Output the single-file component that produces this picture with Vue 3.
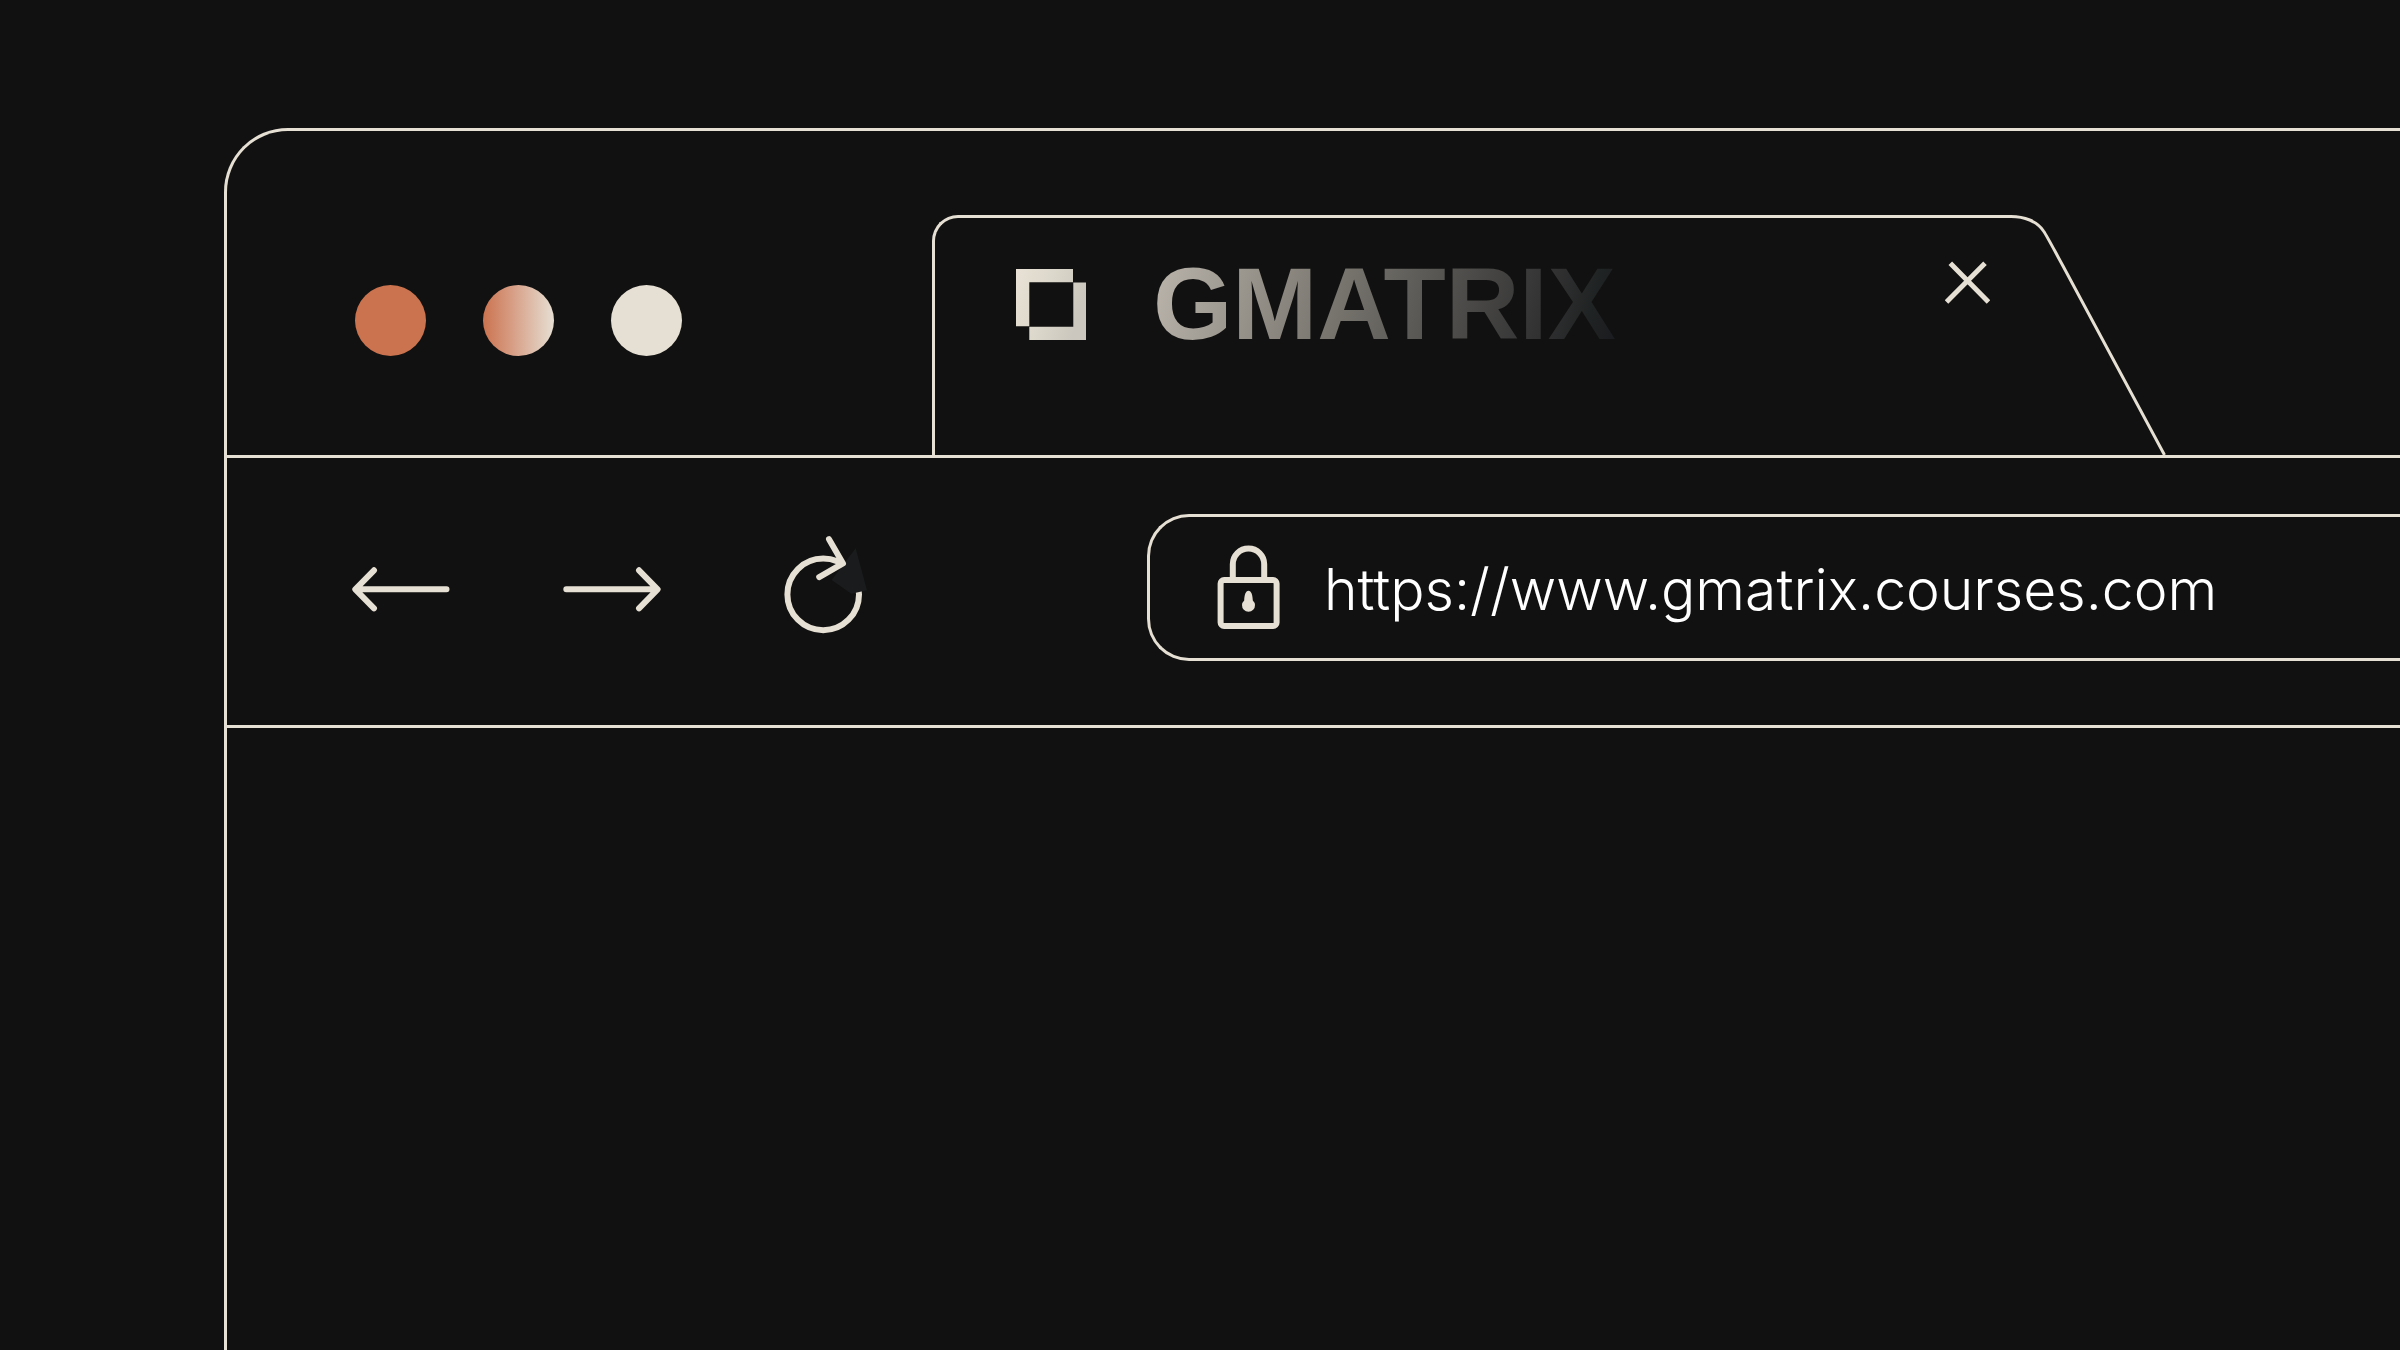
<template>
  <main class="window">
    <header class="tab-strip">
      <div class="window-controls">
        <button
          v-for="control in controls"
          :key="control.name"
          type="button"
          class="dot"
          :class="control.name"
          :aria-label="control.label"
        ></button>
      </div>

      <div v-if="isTabOpen" class="tab">
        <div class="tab-body">
          <div class="brand">
            <svg class="brand-logo" viewBox="0 0 70 71" aria-hidden="true">
              <defs>
                <linearGradient id="logo-fill" x1="0" y1="0" x2="1" y2="0.3">
                  <stop offset="0" stop-color="#e9e1d5" />
                  <stop offset="0.5" stop-color="#dcd8cb" />
                  <stop offset="1" stop-color="#cbc7be" />
                </linearGradient>
              </defs>
              <path
                fill="url(#logo-fill)"
                d="M0 0H57V13.3H13.3V57.3H0ZM57.3 13.5H70V71H13.3V57.7H57.3Z"
              />
            </svg>
            <span class="brand-name">GMATRIX</span>
          </div>
          <button type="button" class="icon-button" aria-label="Close tab" @click="isTabOpen = false">
            <svg class="close-icon" viewBox="0 0 45 45">
              <path d="M5.3 3.3L43.5 42M40 3.3L1.5 42" />
            </svg>
          </button>
        </div>
        <svg class="tab-edge" viewBox="0 0 155 240" aria-hidden="true">
          <path d="M0 1.5C13 1.5 26 6 32.5 16C36 21 44 36.5 52 51L153.5 240" />
        </svg>
      </div>
    </header>

    <nav class="toolbar">
      <div class="nav-buttons">
        <button type="button" class="icon-button" aria-label="Back">
          <svg class="nav-icon arrow" viewBox="0 0 98 117">
            <path d="M94.5 60.3H4M22 41.3L3.3 60.3L22 79.3" />
          </svg>
        </button>
        <button type="button" class="icon-button" aria-label="Forward">
          <svg class="nav-icon arrow" viewBox="0 0 98 117">
            <path d="M3.3 60.3H94M76 41.3L94.6 60.3L76 79.3" />
          </svg>
        </button>
        <button type="button" class="icon-button" aria-label="Reload">
          <svg class="nav-icon reload" viewBox="0 0 98 117">
            <circle cx="49.2" cy="65.4" r="35.8" />
            <polygon points="81.7,19.3 93,61.3 77.3,64.7 57.7,51" />
            <path d="M55 10.2L69 34.4L45.2 48.1" />
          </svg>
        </button>
      </div>

      <label class="address-bar">
        <svg class="lock-icon" viewBox="0 0 63 85" aria-hidden="true">
          <path d="M15.8 33V19.3A15.7 15.7 0 0 1 47.2 19.3V33" />
          <rect x="3.6" y="35" width="56" height="46" rx="3.5" />
          <path
            class="keyhole"
            d="M31.5 45.7C34.4 45.7 35.6 50 35.8 55.5A6.5 6.5 0 1 1 27.2 55.5C27.4 50 28.6 45.7 31.5 45.7Z"
          />
        </svg>
        <input v-model="url" type="text" class="address-input" aria-label="Address" spellcheck="false">
      </label>
    </nav>
  </main>
</template>

<script setup>
import { ref } from 'vue';

const url = ref('https://www.gmatrix.courses.com');
const isTabOpen = ref(true);

const controls = [
  { name: 'close', label: 'Close window' },
  { name: 'minimize', label: 'Minimize window' },
  { name: 'maximize', label: 'Maximize window' },
];
</script>

<style>
body {
  background-color: #111111;
}

#app {
  display: flex;
  min-height: 100vh;
  overflow-x: hidden;
}
</style>

<style scoped>
.window {
  flex: 1;
  min-width: 0;
  box-sizing: border-box;
  margin: 128px 0 0 224px;
  border-top: 3px solid #e6dfd3;
  border-left: 3px solid #e6dfd3;
  border-top-left-radius: 64px;
}

.tab-strip {
  display: flex;
  align-items: flex-start;
  gap: 250px;
  min-height: 324px;
  padding-left: 128px;
  border-bottom: 3px solid #e6dfd3;
}

.window-controls {
  display: flex;
  gap: 57px;
  padding-top: 154px;
}

.dot {
  width: 71px;
  height: 71px;
  padding: 0;
  border: none;
  border-radius: 50%;
}

.close {
  background: #cb734f;
}

.minimize {
  background: linear-gradient(90deg, #cb734f, #d8a28a 45%, #e6dfd3);
}

.maximize {
  background: #e6dfd3;
}

.tab {
  display: flex;
  flex: 0 1 1234px;
  padding-top: 84px;
}

.tab-body {
  display: flex;
  flex: 1;
  align-items: flex-start;
  justify-content: space-between;
  box-sizing: border-box;
  height: 240px;
  padding: 42px 21px 0 81px;
  border-top: 3px solid #e6dfd3;
  border-left: 3px solid #e6dfd3;
  border-top-left-radius: 26px;
}

.tab-edge {
  flex: none;
  width: 155px;
  height: 240px;
  fill: none;
  stroke: #e6dfd3;
  stroke-width: 3;
}

.brand {
  display: flex;
  align-items: center;
  gap: 67px;
  padding-top: 3px;
}

.brand-logo {
  width: 70px;
  height: 71px;
}

.brand-name {
  font-family: "Liberation Sans", Arial, sans-serif;
  font-size: 102px;
  font-weight: 700;
  line-height: 82px;
  color: transparent;
  background: linear-gradient(105deg, #bbb5ac, #7b7871 38%, #4b4a48 67%, #2f2f30 85%, #202323 93%, #1a1b1f);
  -webkit-background-clip: text;
  background-clip: text;
}

.icon-button {
  display: block;
  padding: 0;
  border: none;
  background: none;
  cursor: pointer;
}

.icon-button svg {
  display: block;
  fill: none;
  stroke: #e6dfd3;
}

.close-icon {
  width: 45px;
  height: 45px;
  stroke-width: 5;
}

.toolbar {
  display: flex;
  align-items: center;
  gap: 275px;
  padding: 56px 0 64px 125px;
  border-bottom: 3px solid #e6dfd3;
}

.nav-buttons {
  display: flex;
  gap: 113px;
}

.nav-icon {
  width: 98px;
  height: 117px;
  stroke-width: 6;
  stroke-linecap: round;
  stroke-linejoin: round;
}

.reload polygon {
  fill: #191b1c;
  stroke: none;
}

.address-bar {
  display: flex;
  flex: 1;
  align-items: center;
  gap: 44px;
  box-sizing: border-box;
  min-width: 0;
  height: 147px;
  padding-left: 67px;
  border: 3px solid #e6dfd3;
  border-right: none;
  border-radius: 42px 0 0 42px;
}

.lock-icon {
  flex: none;
  width: 63px;
  height: 85px;
  fill: none;
  stroke: #e6dfd3;
  stroke-width: 6;
}

.lock-icon .keyhole {
  fill: #e6dfd3;
  stroke: none;
}

.address-input {
  flex: 1;
  min-width: 0;
  padding: 4px 0 0;
  border: none;
  outline: none;
  background: none;
  color: #ffffff;
  font-family: Inter, sans-serif;
  font-size: 57px;
  font-weight: 300;
}
</style>
